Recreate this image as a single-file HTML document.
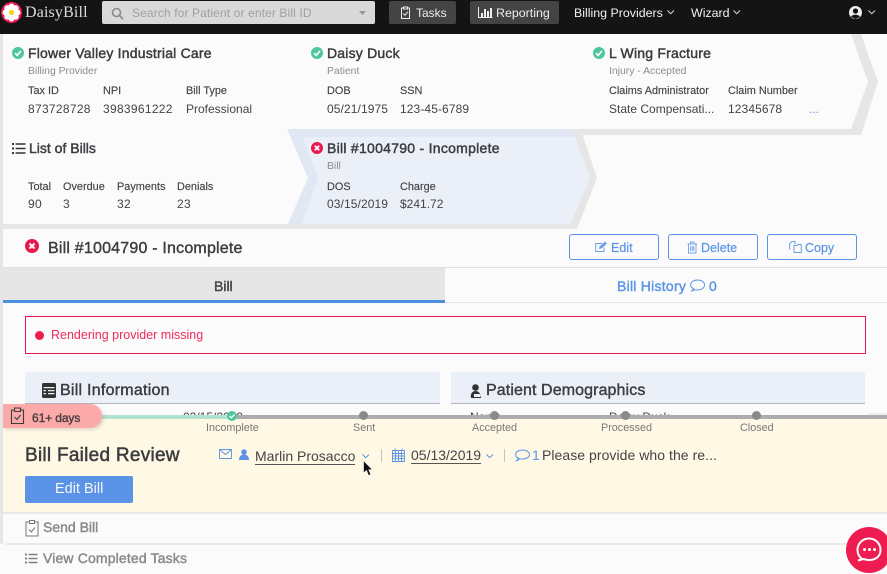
<!DOCTYPE html>
<html><head><meta charset="utf-8">
<style>
html,body{margin:0;padding:0}
body{width:887px;height:574px;overflow:hidden;position:relative;background:#fbfbfc;font-family:"Liberation Sans",sans-serif;color:#3c3c3c}
.t{position:absolute;white-space:nowrap;line-height:1}
.m{-webkit-text-stroke:.4px currentColor}
.h{font-size:14px;color:#3c3c40;letter-spacing:.2px;-webkit-text-stroke:.45px #3c3c40}
.s{font-size:10.4px;color:#8c8c8c}
.l{font-size:10.9px;color:#444;-webkit-text-stroke:.15px #444}
.v{font-size:12px;color:#444}
.n{letter-spacing:.3px}
.d{letter-spacing:.1px}
.b{position:absolute}
svg{position:absolute;overflow:visible}
.btn{position:absolute;top:234px;height:24px;width:88px;border:1px solid #5b93e6;border-radius:3px;box-sizing:content-box}
.blue{color:#5b93e6}
.step{font-size:10.8px;color:#777}
.bt{font-size:12.5px;-webkit-text-stroke:.2px #5b93e6}
.sec{font-size:16px;color:#3c3c40;-webkit-text-stroke:.4px #3c3c40;letter-spacing:.15px}
.y{font-size:14px;color:#444}
</style></head><body>
<!-- left strip -->
<div class="b" style="left:0;top:34px;width:3px;height:510px;background:#e6e6e6"></div>

<!-- chevrons background -->
<svg style="left:0;top:0" width="887" height="240">
<path d="M851 34H861L878 82 861 135H570V129H851L868 82z" fill="#e6e6e6"/>
<path d="M572 130H581L597 178 577 229H3V224H570L590 178z" fill="#e6e6e6"/>
<path d="M288 130H572L590 178 570 224H288L308 178z" fill="#eaeff8"/>
<path d="M287 129H572L575 137H303L318 178 302 224H288L308 178z" fill="#e1e8f4"/>
</svg>

<!-- header -->
<div class="b" style="left:0;top:0;width:887px;height:34px;background:#141414"></div>
<svg style="left:0;top:0" width="30" height="30">
<circle cx="11.500" cy="12.500" r="10.500" fill="#e8194f"/>
<g fill="#fff"><circle cx="11.500" cy="6.500" r="3"/><circle cx="11.500" cy="18.500" r="3"/><circle cx="5.500" cy="12.500" r="3"/><circle cx="17.500" cy="12.500" r="3"/><circle cx="7.300" cy="8.300" r="3"/><circle cx="15.700" cy="8.300" r="3"/><circle cx="7.300" cy="16.700" r="3"/><circle cx="15.700" cy="16.700" r="3"/><circle cx="11.500" cy="12.500" r="5"/></g>
<circle cx="11.500" cy="12.500" r="2.600" fill="#f8d21c"/></svg>
<div class="t" style="left:25px;top:5px;font:16px 'Liberation Serif',serif;color:#ddd;line-height:16px;letter-spacing:.15px">DaisyBill</div>
<div class="b" style="left:102px;top:1px;width:273px;height:23px;background:#d9d9d9;border-radius:2px"></div>
<svg style="left:111px;top:7px" width="14" height="14"><circle cx="5.500" cy="5.500" r="4" fill="none" stroke="#8a8a8a" stroke-width="1.600"/><path d="M8.500 8.500L12 12" stroke="#8a8a8a" stroke-width="1.800"/></svg>
<div class="t" style="left:132px;top:7px;font-size:12px;color:#a0a0a0;letter-spacing:.12px">Search for Patient or enter Bill ID</div>
<svg style="left:359px;top:11px" width="8" height="5"><path d="M0 0H7L3.500 4z" fill="#999"/></svg>
<div class="b" style="left:389px;top:1px;width:67px;height:23px;background:#444;border-radius:2px"></div>
<svg style="left:400px;top:6px" width="12" height="14"><path d="M3 2H1.500V12.500H9.500V2H8M3.500 1H7.500V3H3.500zM3.200 7.500L5 9.300 7.800 5.800" fill="none" stroke="#eee" stroke-width="1"/></svg>
<div class="t" style="left:416px;top:7px;font-size:12px;color:#eee">Tasks</div>
<div class="b" style="left:470px;top:1px;width:89px;height:23px;background:#444;border-radius:2px"></div>
<svg style="left:478px;top:6px" width="15" height="13"><path d="M.5 1V11.500H14.500" fill="none" stroke="#eee"/><path d="M3 7h2v4H3zM6 3h2v8H6zM9 5h2v6H9zM12 2h2v9h-2z" fill="#eee"/></svg>
<div class="t" style="left:496px;top:7px;font-size:12.400px;color:#eee">Reporting</div>
<div class="t" style="left:574px;top:7px;font-size:12.400px;color:#f2f2f2">Billing Providers</div>
<svg style="left:667px;top:10px" width="8" height="5"><path d="M.5.500L3.700 3.700 7 .5" fill="none" stroke="#ddd"/></svg>
<div class="t" style="left:691px;top:7px;font-size:12.400px;color:#f2f2f2">Wizard</div>
<svg style="left:733px;top:10px" width="8" height="5"><path d="M.5.500L3.700 3.700 7 .5" fill="none" stroke="#ddd"/></svg>
<svg style="left:849px;top:6px" width="14" height="14"><circle cx="6.500" cy="6.500" r="6.500" fill="#eee"/><circle cx="6.500" cy="5" r="2.600" fill="#141414"/><path d="M2 11C3 8 10 8 11 11L6.500 13z" fill="#141414"/></svg>
<svg style="left:868px;top:10px" width="8" height="5"><path d="M.5.500L3.700 3.700 7 .5" fill="none" stroke="#ddd"/></svg>

<!-- top cards -->
<svg style="left:12px;top:47px" width="12" height="12"><circle cx="6" cy="6" r="6" fill="#4fc6a0"/><path d="M3 6.200L5.200 8.300 9 4" fill="none" stroke="#fff" stroke-width="1.600"/></svg>
<div class="t h" style="left:28px;top:46px">Flower Valley Industrial Care</div>
<div class="t s" style="left:28px;top:67px">Billing Provider</div>
<div class="t l" style="left:28px;top:86px">Tax ID</div>
<div class="t l" style="left:103px;top:86px">NPI</div>
<div class="t l" style="left:186px;top:86px">Bill Type</div>
<div class="t v n" style="left:28px;top:103px">873728728</div>
<div class="t v n" style="left:103px;top:103px">3983961222</div>
<div class="t v" style="left:186px;top:103px">Professional</div>

<svg style="left:311px;top:47px" width="12" height="12"><circle cx="6" cy="6" r="6" fill="#4fc6a0"/><path d="M3 6.200L5.200 8.300 9 4" fill="none" stroke="#fff" stroke-width="1.600"/></svg>
<div class="t h" style="left:327px;top:46px">Daisy Duck</div>
<div class="t s" style="left:327px;top:67px">Patient</div>
<div class="t l" style="left:327px;top:86px">DOB</div>
<div class="t l" style="left:400px;top:86px">SSN</div>
<div class="t v d" style="left:327px;top:103px">05/21/1975</div>
<div class="t v d" style="left:400px;top:103px">123-45-6789</div>

<svg style="left:593px;top:47px" width="12" height="12"><circle cx="6" cy="6" r="6" fill="#4fc6a0"/><path d="M3 6.200L5.200 8.300 9 4" fill="none" stroke="#fff" stroke-width="1.600"/></svg>
<div class="t h" style="left:609px;top:46px">L Wing Fracture</div>
<div class="t s" style="left:609px;top:67px">Injury - Accepted</div>
<div class="t l" style="left:609px;top:86px">Claims Administrator</div>
<div class="t l" style="left:728px;top:86px">Claim Number</div>
<div class="t v" style="left:609px;top:103px">State Compensati...</div>
<div class="t v d" style="left:728px;top:103px">12345678</div>
<div class="t blue" style="left:809px;top:103px;font-size:12px">...</div>

<!-- row 2 -->
<svg style="left:12px;top:143px" width="14" height="11"><path d="M0 0h2v2H0zM0 4.500h2v2H0zM0 9h2v2H0zM3.500 .2H13.500V1.800H3.500zM3.500 4.700H13.500V6.300H3.500zM3.500 9.200H13.500V10.800H3.500z" fill="#333"/></svg>
<div class="t h" style="left:29px;top:141px;letter-spacing:0">List of Bills</div>
<div class="t l" style="left:28px;top:182px">Total</div>
<div class="t l" style="left:63px;top:182px">Overdue</div>
<div class="t l" style="left:117px;top:182px">Payments</div>
<div class="t l" style="left:177px;top:182px">Denials</div>
<div class="t v n" style="left:28px;top:198px">90</div>
<div class="t v n" style="left:63px;top:198px">3</div>
<div class="t v n" style="left:117px;top:198px">32</div>
<div class="t v n" style="left:177px;top:198px">23</div>

<svg style="left:311px;top:142px" width="12" height="12"><circle cx="6" cy="6" r="6" fill="#e8194f"/><path d="M3.800 3.800L8.200 8.200M8.200 3.800L3.800 8.200" stroke="#fff" stroke-width="1.800"/></svg>
<div class="t h" style="left:327px;top:141px;letter-spacing:.27px">Bill #1004790 - Incomplete</div>
<div class="t s" style="left:327px;top:162px">Bill</div>
<div class="t l" style="left:327px;top:182px">DOS</div>
<div class="t l" style="left:400px;top:182px">Charge</div>
<div class="t v d" style="left:327px;top:198px">03/15/2019</div>
<div class="t v" style="left:400px;top:198px">$241.72</div>

<!-- title -->
<svg style="left:25px;top:239px" width="14" height="14"><circle cx="7" cy="7" r="7" fill="#e8194f"/><path d="M4.500 4.500L9.500 9.500M9.500 4.500L4.500 9.500" stroke="#fff" stroke-width="2"/></svg>
<div class="t sec" style="left:48px;top:241px;letter-spacing:.2px">Bill #1004790 - Incomplete</div>
<div class="btn" style="left:569px"></div>
<svg style="left:595px;top:241px" width="13" height="12"><path d="M9 6.500V10.500H.7V2.500H7" fill="none" stroke="#6d9fe8"/><path d="M4 8L4.500 5.500 10 .5 12 2.500 6.500 7.500z" fill="#6d9fe8"/></svg>
<div class="t blue bt" style="left:611px;top:242px">Edit</div>
<div class="btn" style="left:668px"></div>
<svg style="left:687px;top:241px" width="11" height="13"><path d="M.5 3H10M3.500 3V1H7V3M1.500 3V12H9V3M3.700 5V10M5.200 5V10M6.800 5V10" fill="none" stroke="#6d9fe8" stroke-width=".9"/></svg>
<div class="t blue bt" style="left:701px;top:242px">Delete</div>
<div class="btn" style="left:767px"></div>
<svg style="left:789px;top:241px" width="13" height="12"><path d="M.7 8.500V2.500L3 .5H6V3.500M5 4.500H8L9 3.500H12.300V11.500H5z" fill="none" stroke="#6d9fe8"/></svg>
<div class="t blue bt" style="left:805px;top:242px">Copy</div>

<!-- tabs -->
<div class="b" style="left:3px;top:267px;width:884px;height:1px;background:#e2e2e2"></div>
<div class="b" style="left:3px;top:268px;width:442px;height:32px;background:#e6e6e6"></div>
<div class="b" style="left:3px;top:300px;width:442px;height:3px;background:#4a90e2"></div>
<div class="b" style="left:445px;top:302px;width:442px;height:1px;background:#e6e6e6"></div>
<div class="t m" style="left:214px;top:279px;font-size:14px;color:#444">Bill</div>
<div class="t blue m" style="left:617px;top:279px;font-size:14px;letter-spacing:.25px">Bill History</div>
<svg style="left:690px;top:279px" width="15" height="13"><path d="M3.500 9.500C1.500 9 .7 7.500.7 6 .7 3 3.500 1 7.500 1s7 2 7 5-3 5-7 5c-1 0-2 0-3-.3C3.500 11.500 2.500 12 1.500 12 2.500 11 3.300 10.500 3.500 9.500z" fill="none" stroke="#5b93e6"/></svg>
<div class="t blue m" style="left:709px;top:279px;font-size:14px">0</div>

<!-- alert -->
<div class="b" style="left:25px;top:316px;width:839px;height:36px;border:1px solid #e8194f"></div>
<div class="b" style="left:35px;top:331px;width:9px;height:9px;border-radius:50%;background:#ee1c50"></div>
<div class="t" style="left:51px;top:329px;font-size:12.500px;color:#ee2a5c">Rendering provider missing</div>

<!-- section headers -->
<div class="b" style="left:25px;top:372px;width:415px;height:32px;background:#eaeff8;border-bottom:1px solid #b4b4bc;box-sizing:border-box"></div>
<div class="b" style="left:451px;top:372px;width:414px;height:32px;background:#eaeff8;border-bottom:1px solid #b4b4bc;box-sizing:border-box"></div>
<svg style="left:42px;top:383px" width="14" height="15"><rect width="14" height="15" rx="1.500" fill="#333"/><path d="M1.500 4H12.500V5.200H1.500zM1.500 7H4V8.200H1.500zM1.500 10H4V11.200H1.500zM6 7H12.500V8.200H6zM6 10H12.500V11.200H6z" fill="#eaeff8"/></svg>
<div class="t sec" style="left:60px;top:383px;letter-spacing:.25px">Bill Information</div>
<svg style="left:470px;top:384px" width="12" height="14"><circle cx="5.500" cy="3.500" r="3.300" fill="#333"/><path d="M1 14C0 9 3 7 5.500 7S11 9 11 14z" fill="#333"/><path d="M4 10H10.500V13H4z" fill="#eaeff8"/></svg>
<div class="t sec" style="left:486px;top:383px;letter-spacing:.1px">Patient Demographics</div>
<div class="t" style="left:183px;top:411px;font-size:12px;color:#444">03/15/2019</div>
<div class="t" style="left:470px;top:411px;font-size:12px;color:#444">Name</div>
<div class="t" style="left:609px;top:411px;font-size:12px;color:#444">Daisy Duck</div>

<!-- yellow panel -->
<div class="b" style="left:3px;top:419px;width:884px;height:93px;background:#fef8e5"></div>
<div class="b" style="left:3px;top:512px;width:884px;height:2px;background:#e8e8e4"></div>
<div class="b" style="left:100px;top:415px;width:132px;height:4px;background:#b2e2d0"></div>
<div class="b" style="left:232px;top:415px;width:655px;height:4px;background:#adadad"></div>
<div class="b" style="left:868px;top:413px;width:19px;height:2px;background:#eee"></div>
<div class="b" style="left:227px;top:411px;width:10px;height:10px;border-radius:50%;background:#4fc6a0"></div>
<svg style="left:228px;top:412px" width="8" height="8"><path d="M1.500 4L3.300 5.800 6.500 2.500" fill="none" stroke="#fff" stroke-width="1.300"/></svg>
<div class="b" style="left:359px;top:411px;width:9px;height:9px;border-radius:50%;background:#8a8a8a"></div>
<div class="b" style="left:490px;top:411px;width:9px;height:9px;border-radius:50%;background:#8a8a8a"></div>
<div class="b" style="left:621px;top:411px;width:9px;height:9px;border-radius:50%;background:#8a8a8a"></div>
<div class="b" style="left:752px;top:411px;width:9px;height:9px;border-radius:50%;background:#8a8a8a"></div>
<div class="t step" style="left:206px;top:423px">Incomplete</div>
<div class="t step" style="left:353px;top:423px">Sent</div>
<div class="t step" style="left:472px;top:423px">Accepted</div>
<div class="t step" style="left:601px;top:423px">Processed</div>
<div class="t step" style="left:740px;top:423px">Closed</div>

<div class="b" style="left:3px;top:404px;width:99px;height:24px;background:#fca9a9;border-radius:0 12px 12px 0;box-shadow:2px 2px 3px rgba(120,100,80,.2)"></div>
<svg style="left:10px;top:407px" width="15" height="18"><path d="M4 3H1.500V16.500H13.500V3H11M4.500 1H10.500V4.500H4.500zM4.500 10L7 12.500 10.500 8" fill="none" stroke="#3c3c3c" stroke-width="1.100"/></svg>
<div class="t" style="left:32px;top:412px;font-size:12px;letter-spacing:-.1px;color:#4a4040;-webkit-text-stroke:.4px #4a4040">61+ days</div>

<div class="t" style="left:25px;top:446px;font-size:19px;color:#3c3c40;letter-spacing:.27px;-webkit-text-stroke:.5px #3c3c40">Bill Failed Review</div>
<svg style="left:219px;top:449px" width="13" height="10"><path d="M.5.500H12.500V9.500H.5zM.5.500L6.500 5.500 12.500.5" fill="none" stroke="#5b93e6" stroke-width=".9"/></svg>
<svg style="left:239px;top:449px" width="10" height="12"><circle cx="5" cy="3" r="2.800" fill="#5b93e6"/><path d="M0 11C0 7 2.500 5.500 5 5.500S10 7 10 11z" fill="#5b93e6"/></svg>
<div class="t y" style="left:255px;top:449px;border-bottom:1px solid #555;padding-bottom:1px">Marlin Prosacco</div>
<svg style="left:362px;top:454px" width="8" height="5"><path d="M.5.500L3.700 3.700 7 .5" fill="none" stroke="#5b93e6"/></svg>
<div class="b" style="left:381px;top:449px;width:1px;height:13px;background:#c4c4c0"></div>
<svg style="left:392px;top:448px" width="13" height="14"><path d="M.5 2.500H12.500V13.500H.5zM.5 5.500H12.500M.5 8H12.500M.5 10.700H12.500M3.500 2.500V13.500M6.500 2.500V13.500M9.500 2.500V13.500M3 .5V3M10 .5V3" fill="none" stroke="#5b93e6" stroke-width=".9"/></svg>
<div class="t y" style="left:411px;top:448px;border-bottom:1px solid #555;padding-bottom:1px">05/13/2019</div>
<svg style="left:486px;top:454px" width="8" height="5"><path d="M.5.500L3.700 3.700 7 .5" fill="none" stroke="#5b93e6"/></svg>
<div class="b" style="left:504px;top:449px;width:1px;height:13px;background:#c4c4c0"></div>
<svg style="left:515px;top:449px" width="15" height="13"><path d="M3.500 9C1.500 8.500.7 7 .7 5.500.7 3 3.500 1 7.500 1s7 2 7 4.500-3 4.500-7 4.500c-1 0-2 0-3-.3C3.500 11 2.500 11.700 1.500 11.700 2.500 10.700 3.300 10 3.500 9z" fill="none" stroke="#5b93e6"/></svg>
<div class="t blue" style="left:532px;top:448px;font-size:14px">1</div>
<div class="t y" style="left:542px;top:448px;letter-spacing:.05px">Please provide who the re...</div>

<div class="b" style="left:25px;top:476px;width:108px;height:27px;background:#5b93e6;border-radius:2px"></div>
<div class="t" style="left:55px;top:482px;font-size:14.500px;color:#f4f6fa">Edit Bill</div>

<!-- cursor -->
<svg style="left:363px;top:460px" width="11" height="17"><path d="M.5 .5V13L3.500 10.500 5.500 15.500 7.800 14.500 5.800 9.800H9.500z" fill="#111" stroke="#fff" stroke-width=".6"/></svg>

<!-- tasks -->
<svg style="left:25px;top:519px" width="14" height="18"><path d="M4 3H1V17H13V3H10M4.500 1.500H9.500V4.500H4.500zM4 10.500L6.300 13 10 8.500" fill="none" stroke="#777" stroke-width="1"/></svg>
<div class="t" style="left:43px;top:520px;font-size:14px;color:#8a8a8a;-webkit-text-stroke:.45px #8a8a8a">Send Bill</div>
<div class="b" style="left:6px;top:543px;width:881px;height:2px;background:#e8e8e8"></div>
<svg style="left:25px;top:553px" width="13" height="11"><path d="M0 .5h2v2H0zM0 4.500h2v2H0zM0 8.500h2v2H0zM3.500 .8H12.500V2.200H3.500zM3.500 4.800H12.500V6.200H3.500zM3.500 8.800H12.500V10.200H3.500z" fill="#808080"/></svg>
<div class="t" style="left:43px;top:551px;font-size:14px;color:#8a8a8a;letter-spacing:.15px;-webkit-text-stroke:.45px #8a8a8a">View Completed Tasks</div>

<!-- chat bubble -->
<div class="b" style="left:846px;top:527px;width:46px;height:46px;border-radius:50%;background:#ee1c50"></div>
<svg style="left:856px;top:536px" width="28" height="28"><path d="M6 23C3.500 21 1.500 18 1.500 14 1.500 7.500 6.500 2.500 13 2.500S24.500 7.500 24.500 14 19.500 24 13 24C11 24 9 23.500 7.500 23L2 24.500C3.500 24 5 23.500 6 23z" fill="none" stroke="#fff" stroke-width="2"/><circle cx="8.500" cy="13.500" r="1.500" fill="#fff"/><circle cx="13.500" cy="13.500" r="1.500" fill="#fff"/><circle cx="18.500" cy="13.500" r="1.500" fill="#fff"/></svg>
</body></html>
